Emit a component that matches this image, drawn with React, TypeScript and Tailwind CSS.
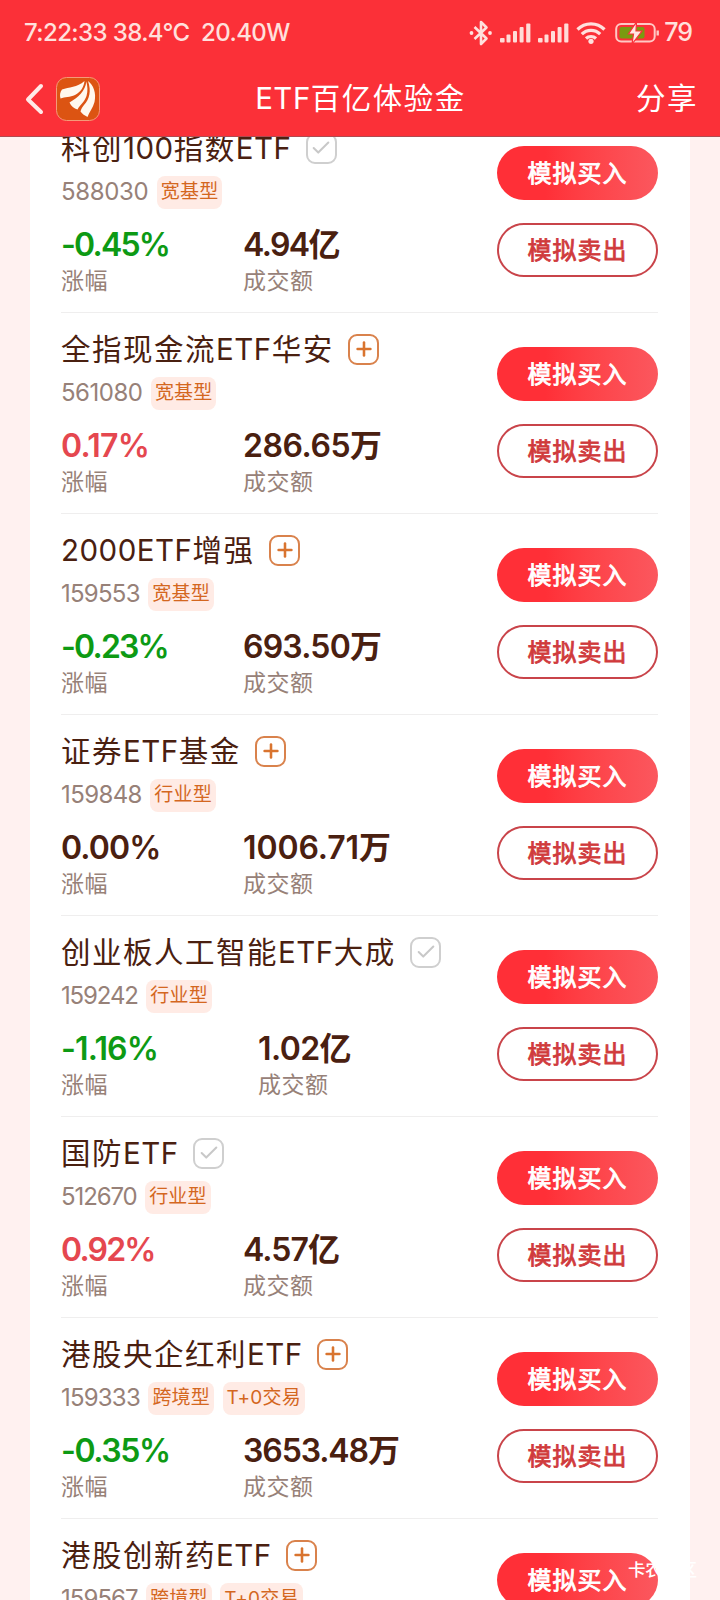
import { Check, Plus } from 'lucide-react';
import clsx from 'clsx';

interface Fund {
  name: string;
  code: string;
  tags: string[];
  change: string;
  volume: string;
  added?: boolean;
  codeClass: string;
  changeClass: string;
  volumeClass: string;
  columnClass?: string;
}

const funds: Fund[] = [
  {
    name: '科创100指数ETF',
    code: '588030',
    tags: ['宽基型'],
    change: '-0.45%',
    volume: '4.94亿',
    added: true,
    codeClass: 'tracking-[-0.35px]',
    changeClass: 'tracking-[-1.8px]',
    volumeClass: 'tracking-[-1.6px]',
  },
  {
    name: '全指现金流ETF华安',
    code: '561080',
    tags: ['宽基型'],
    change: '0.17%',
    volume: '286.65万',
    codeClass: 'tracking-[-0.5px]',
    changeClass: 'tracking-[-0.7px]',
    volumeClass: 'tracking-[-0.45px]',
  },
  {
    name: '2000ETF增强',
    code: '159553',
    tags: ['宽基型'],
    change: '-0.23%',
    volume: '693.50万',
    codeClass: 'tracking-[-0.75px]',
    changeClass: 'tracking-[-1.8px]',
    volumeClass: 'tracking-[-0.8px]',
  },
  {
    name: '证券ETF基金',
    code: '159848',
    tags: ['行业型'],
    change: '0.00%',
    volume: '1006.71万',
    codeClass: 'tracking-[-0.6px]',
    changeClass: 'tracking-[-0.9px]',
    volumeClass: 'tracking-[-0.1px]',
  },
  {
    name: '创业板人工智能ETF大成',
    code: '159242',
    tags: ['行业型'],
    change: '-1.16%',
    volume: '1.02亿',
    added: true,
    codeClass: 'tracking-[-1.15px]',
    changeClass: 'tracking-[-0.8px]',
    volumeClass: 'tracking-[-0.6px]',
    columnClass: 'w-[197px]',
  },
  {
    name: '国防ETF',
    code: '512670',
    tags: ['行业型'],
    change: '0.92%',
    volume: '4.57亿',
    added: true,
    codeClass: 'tracking-[-1.1px]',
    changeClass: 'tracking-[-1.8px]',
    volumeClass: 'tracking-[-0.9px]',
  },
  {
    name: '港股央企红利ETF',
    code: '159333',
    tags: ['跨境型', 'T+0交易'],
    change: '-0.35%',
    volume: '3653.48万',
    codeClass: 'tracking-[-0.8px]',
    changeClass: 'tracking-[-1.4px]',
    volumeClass: 'tracking-[-1.1px]',
  },
  {
    name: '港股创新药ETF',
    code: '159567',
    tags: ['跨境型', 'T+0交易'],
    change: '-0.52%',
    volume: '8.16亿',
    codeClass: 'tracking-[-0.95px]',
    changeClass: 'tracking-[-1.2px]',
    volumeClass: 'tracking-[-0.8px]',
  },
];

const changeColor = (change: string) => {
  if (change.startsWith('-')) return 'text-[#0d9a14]';
  if (change === '0.00%') return 'text-[#4a2010]';
  return 'text-[#e5474f]';
};

// Latin runs sit tighter than the Chinese characters around them
const MixedText = ({ text }: { text: string }) => (
  <>
    {text.split(/([A-Z0-9]+)/).map((part, i) => (
      <span key={i} className={i % 2 ? 'tracking-[0.5px]' : 'tracking-[1.5px]'}>{part}</span>
    ))}
  </>
);

const SignalBars = () => (
  <svg width="31" height="20" viewBox="0 0 31 20" fill="#ffdcd8">
    <rect x="0" y="15" width="4.6" height="4.5" rx="1" />
    <rect x="6.5" y="11.5" width="4" height="8" rx="1" />
    <rect x="13" y="8" width="4" height="11.5" rx="1" />
    <rect x="19.6" y="4" width="4" height="15.5" rx="1" />
    <rect x="26.2" y="0.5" width="4.2" height="19" rx="1" />
  </svg>
);

const StatusBar = () => (
  <div className="flex h-[66px] items-center pr-7 pl-6 text-[#ffe0dd]">
    <span className="text-[24px] font-medium tracking-[-0.6px] whitespace-pre">7:22:33 38.4°C  20.40W</span>
    <div className="ml-auto flex items-center">
      <svg width="24" height="26" viewBox="0 0 24 26" fill="none" stroke="#ffe0dd" strokeWidth="2.6" strokeLinejoin="round">
        <path d="M5.5 7 17.5 18.5 12 24V2l5.5 5.5L5.5 19" />
        <circle cx="2.5" cy="13" r="1.9" fill="#ffe0dd" stroke="none" />
        <circle cx="21" cy="13" r="1.9" fill="#ffe0dd" stroke="none" />
      </svg>
      <span className="ml-[7px]"><SignalBars /></span>
      <span className="ml-[7px]"><SignalBars /></span>
      <svg className="ml-[7px]" width="30" height="22" viewBox="0 0 30 22" fill="none" stroke="#ffe0dd" strokeWidth="3.2">
        <path d="M1.5 7.5a19 19 0 0 1 27 0" />
        <path d="M5.8 12.2a13 13 0 0 1 18.4 0" />
        <path d="M10 16.5a7.2 7.2 0 0 1 10 0" />
        <circle cx="15" cy="19.3" r="2.6" fill="#ffe0dd" stroke="none" />
      </svg>
      <svg className="ml-[9px]" width="45" height="22" viewBox="0 0 45 22">
        <rect x="1.2" y="2" width="38.5" height="17.5" rx="5" fill="none" stroke="#ffc9c5" strokeWidth="2" />
        <rect x="4.5" y="5" width="25" height="11.5" rx="2" fill="#7a9a10" />
        <path d="M42.7 8.5v5" stroke="#ffc9c5" strokeWidth="2.4" />
        <path d="M21.5 0 13.500 12h5L17 22 27 9h-6z" fill="#ffe8e4" stroke="#fb3038" strokeWidth="1.2" />
      </svg>
      <span className="ml-[4px] text-[25px] font-medium tracking-[-1px]">79</span>
    </div>
  </div>
);

const NavBar = () => (
  <div className="flex h-[65px] items-center pr-[22px] pl-6 text-white">
    <svg width="20" height="32" viewBox="0 0 20 32" fill="none" stroke="#ffe9e7" strokeWidth="4" strokeLinecap="round" strokeLinejoin="round">
      <path d="M17 3 4 16.5 17 29" />
    </svg>
    <svg className="ml-3" width="44" height="44" viewBox="0 0 44 44">
      <rect x="0.5" y="0.5" width="43" height="43" rx="10" fill="#dc5412" stroke="#f59a78" />
      <g fill="#fff8ee">
        <path d="M28.5 4C21 10.5 13 10 6 12.5C4 15 3.5 18 4.5 21.5C9 19.5 14 20.5 19 18C25 15 28 9.5 28.5 4z" />
        <path d="M30.3 4.5C29.5 14 22 20.5 13.5 25.5C15 29 18 31.5 21.5 32.5C24 28 28.5 25 30.5 19C32 14 31.5 9 30.3 4.5z" />
        <path d="M32 4C35.5 14 33.5 22 28 28C26.5 30 25 32 24.5 34.5C26.5 37 28.5 38.5 31.5 40C33 35 37 31 38.5 25C40.5 16 37.5 8 32 4z" />
      </g>
    </svg>
    <h1 className="flex-1 pr-[15px] text-center text-[29.5px]"><MixedText text="ETF百亿体验金" /></h1>
    <span className="text-[29.5px] tracking-[1.5px]">分享</span>
  </div>
);

const Tag = ({ label }: { label: string }) => (
  <span className="flex h-[33px] items-center rounded-lg bg-[#ffebe5] px-[4px] text-[19px] tracking-[0.2px] text-[#d4671f]">
    {label}
  </span>
);

const FundRow = ({ fund }: { fund: Fund }) => (
  <li className="flex h-[201px] shrink-0 justify-between border-b border-[#efeeee]">
    <div className="flex flex-col pt-[14px]">
      <div className="flex h-11 items-center">
        <span className="text-[29.5px] whitespace-nowrap text-[#4a2010]"><MixedText text={fund.name} /></span>
        <span
          className={clsx(
            'ml-[14.5px] flex size-[31px] items-center justify-center rounded-[9px] border-[2.5px]',
            fund.added ? 'border-[#cfcfcf] text-[#c8c8c8]' : 'border-[#d9824c] text-[#d9742f]'
          )}
        >
          {fund.added ? <Check size={22} strokeWidth={2.2} /> : <Plus size={22} strokeWidth={2.8} />}
        </span>
      </div>
      <div className="mt-[5px] flex h-[33px] items-center gap-[8.5px] pt-px">
        <span className={clsx('text-[24px] text-[#978178]', fund.codeClass)}>{fund.code}</span>
        {fund.tags.map((tag) => (
          <Tag key={tag} label={tag} />
        ))}
      </div>
      <div className="mt-4 flex">
        <div className={fund.columnClass ?? 'w-[182px]'}>
          <div className={clsx('h-[42px] text-[32px] leading-[42px] font-semibold', changeColor(fund.change), fund.changeClass)}>{fund.change}</div>
          <div className="h-[30px] text-[23px] leading-[31px] tracking-[0.5px] text-[#978178]">涨幅</div>
        </div>
        <div>
          <div className={clsx('h-[42px] text-[32px] leading-[42px] font-semibold text-[#4a2010]', fund.volumeClass)}>{fund.volume}</div>
          <div className="h-[30px] text-[23px] leading-[31px] tracking-[0.5px] text-[#978178]">成交额</div>
        </div>
      </div>
    </div>
    <div className="flex flex-col gap-[23px] pt-[34px]">
      <button className="h-[54px] w-[161px] rounded-full bg-linear-to-r from-[#ff2f37] from-30% to-[#fb575e] pt-[2px] text-[24px] tracking-[1px] text-white [-webkit-text-stroke:0.8px]">
        模拟买入
      </button>
      <button className="h-[54px] w-[161px] rounded-full border-2 border-[#c9444a] bg-white pt-[2px] text-[24px] tracking-[1px] text-[#d03a3c] [-webkit-text-stroke:0.8px]">
        模拟卖出
      </button>
    </div>
  </li>
);

export default function App() {
  return (
    <div className="relative flex h-[1600px] w-[720px] flex-col overflow-hidden bg-[#fff1f0] font-['Inter','Noto_Sans_CJK_SC',sans-serif]">
      <header className="z-10 h-[137px] shrink-0 border-b border-[#b04a50] bg-[#fb3038]">
        <StatusBar />
        <NavBar />
      </header>
      <main className="mx-[30px] -mt-[25px] bg-white pr-[32px] pl-[31px]">
        <ul>
          {funds.map((fund) => (
            <FundRow key={fund.code} fund={fund} />
          ))}
        </ul>
      </main>
      <span className="absolute top-[1557px] left-[628px] text-[17.5px] font-medium tracking-[-0.3px] whitespace-nowrap text-white">卡农社区</span>
    </div>
  );
}
